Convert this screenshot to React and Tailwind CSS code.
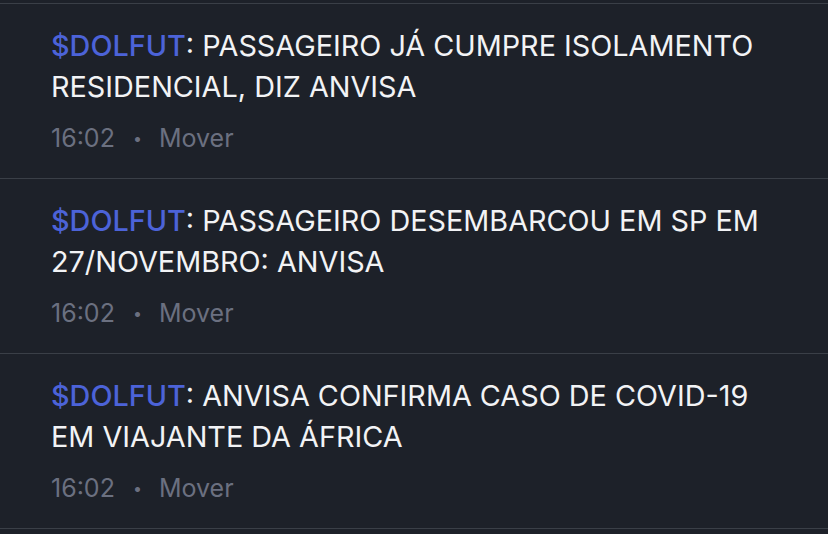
import React from 'react';

const items = [
  { text: 'PASSAGEIRO JÁ CUMPRE ISOLAMENTO RESIDENCIAL, DIZ ANVISA' },
  { text: 'PASSAGEIRO DESEMBARCOU EM SP EM 27/NOVEMBRO: ANVISA' },
  { text: 'ANVISA CONFIRMA CASO DE COVID-19 EM VIAJANTE DA ÁFRICA' },
];

const NewsItem = ({ text }) => (
  <div className="h-[175px] border-b border-[#3a3f47] pl-[51px] pr-[40px] pt-[21px]">
    <p className="text-[28.8px] leading-[41px] text-[#f2f3f5] w-[730px]">
      <span className="text-[#4c63d8] font-medium">$DOLFUT</span>: {text}
    </p>
    <div className="mt-[14px] flex items-center text-[25px] leading-[34px] text-[#6b7080]">
      <span>16:02</span>
      <span className="ml-[18px] mr-[17px] text-[16px]">•</span>
      <span>Mover</span>
    </div>
  </div>
);

export default function App() {
  return (
    <div className="w-[828px] h-[534px] overflow-hidden bg-[#1d2129]" style={{ fontFamily: 'Inter, "Noto Sans", sans-serif' }}>
      <div className="h-[3px]" />
      <div className="border-t border-[#3a3f47]">
        {items.map((item, i) => (
          <NewsItem key={i} text={item.text} />
        ))}
      </div>
    </div>
  );
}
